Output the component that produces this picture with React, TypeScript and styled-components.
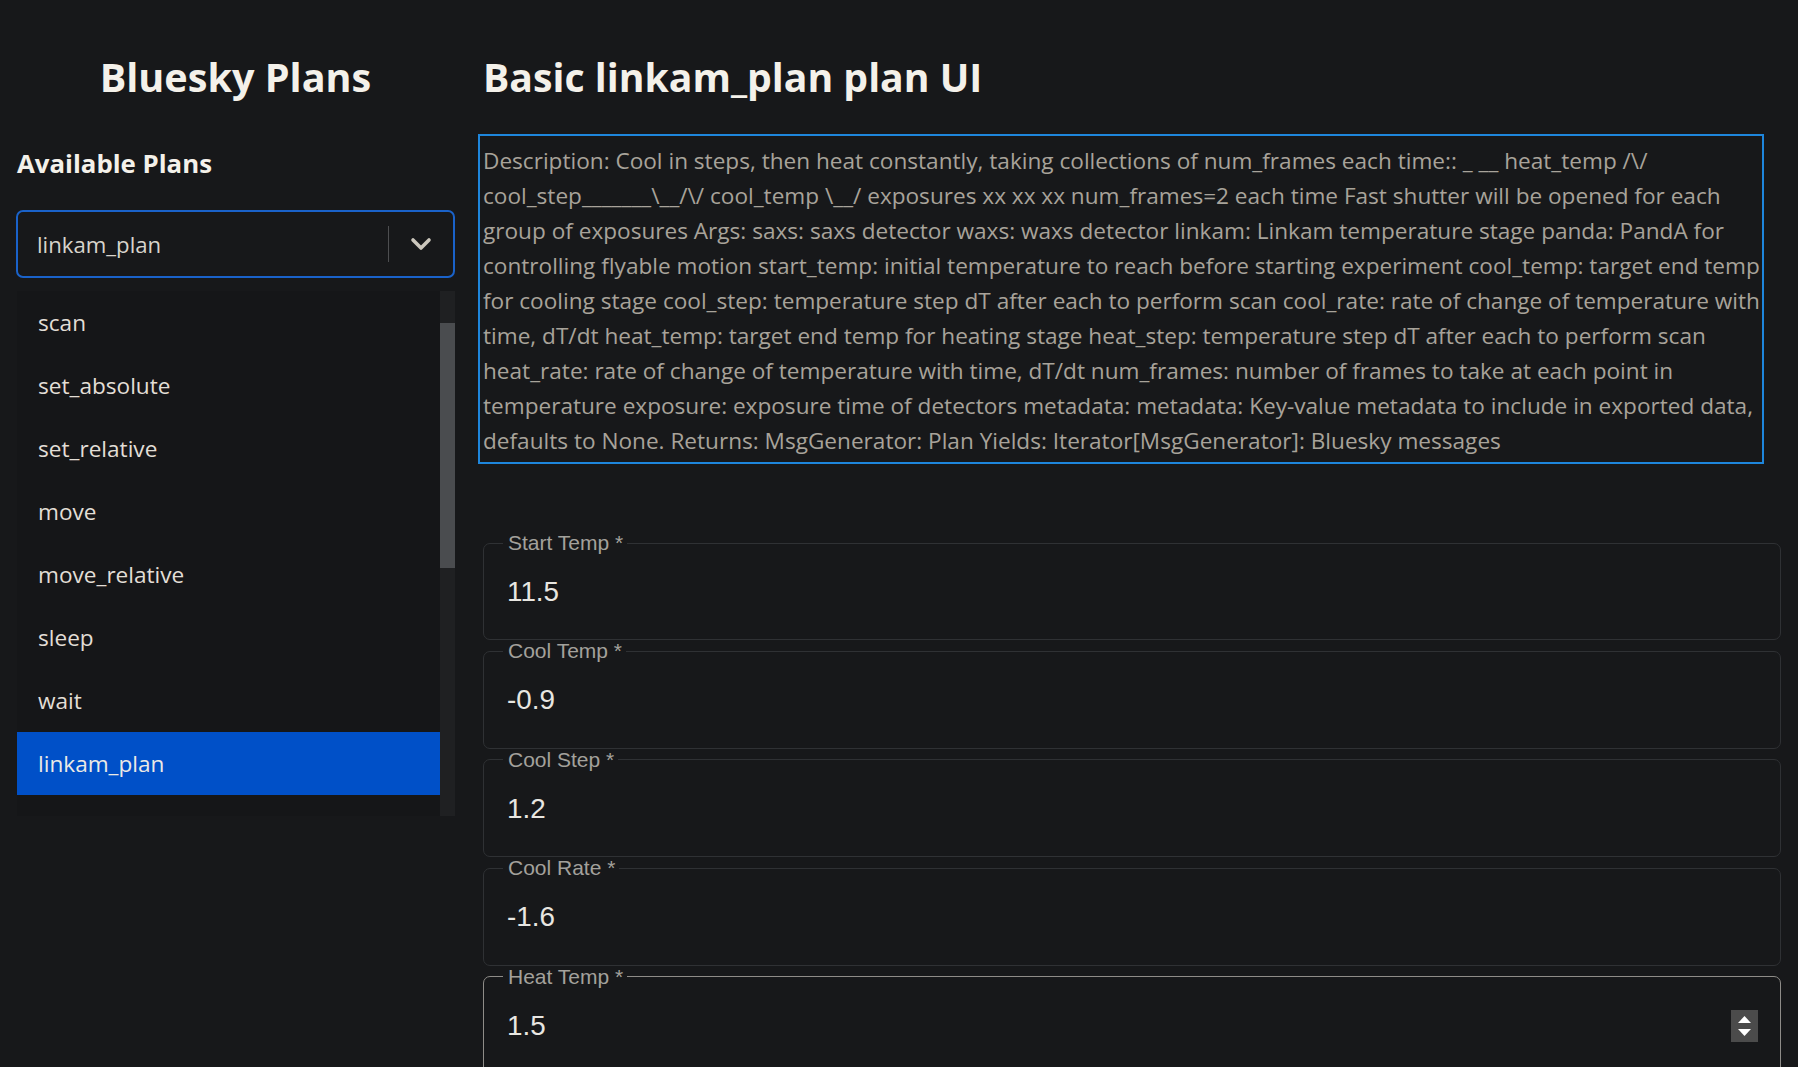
import React from "react";
import styled, { createGlobalStyle } from "styled-components";

const GlobalStyle = createGlobalStyle`
  html, body {
    margin: 0;
    padding: 0;
    background: #17181a;
    overflow: hidden;
  }
  body {
    font-family: "Open Sans", "Noto Sans", sans-serif;
  }
  * { box-sizing: border-box; }
`;

const Page = styled.div`
  display: grid;
  grid-template-columns: 439px 1fr;
  column-gap: 23px;
  padding: 47px 17px 0 16px;
  height: 1067px;
  overflow: hidden;
`;

const Sidebar = styled.aside`
  display: flex;
  flex-direction: column;
`;

const Main = styled.main`
  display: flex;
  flex-direction: column;
  min-width: 0;
`;

const Title = styled.h1<{ $center?: boolean }>`
  margin: 0;
  height: 60px;
  line-height: 60px;
  font-size: ${(p) => (p.$center ? "39.6px" : "39.2px")};
  font-weight: 700;
  color: #f4f1ea;
  text-align: ${(p) => (p.$center ? "center" : "left")};
  padding-left: ${(p) => (p.$center ? "0" : "5px")};
  white-space: nowrap;
`;

const SubTitle = styled.h2`
  margin: 39px 0 0 1px;
  height: 34px;
  line-height: 34px;
  font-size: 25.8px;
  font-weight: 700;
  color: #f4f1ea;
`;

const SelectBox = styled.div`
  margin-top: 30px;
  height: 68px;
  border: 2px solid #1a62c9;
  border-radius: 7px;
  display: flex;
  align-items: center;
`;

const SelectValue = styled.span`
  flex: 1;
  padding-left: 19px;
  font-size: 22.2px;
  color: #d8d4cc;
`;

const Separator = styled.span`
  width: 1px;
  height: 36px;
  background: #4d4e50;
`;

const Indicator = styled.span`
  width: 64px;
  display: flex;
  align-items: center;
  justify-content: center;
  color: #ccc7bd;
`;

const ListBox = styled.div`
  margin: 13px 0 0 1px;
  height: 525px;
  display: flex;
  background: #151618;
`;

const ListBody = styled.ul`
  flex: 1;
  margin: 0;
  padding: 0;
  list-style: none;
  overflow: hidden;
`;

const ListItem = styled.li<{ $selected?: boolean }>`
  height: 63px;
  display: flex;
  align-items: center;
  padding-left: 21px;
  font-size: 22.6px;
  color: ${(p) => (p.$selected ? "#eceae5" : "#e2ded6")};
  background: ${(p) => (p.$selected ? "#0050c8" : "transparent")};
`;

const ScrollTrack = styled.div`
  width: 15px;
  background: #1f2022;
  display: flex;
  flex-direction: column;
`;

const ScrollThumb = styled.div`
  margin-top: 32px;
  height: 245px;
  background: #4a4c4f;
`;

const Description = styled.div`
  margin: 27px 17px 0 0;
  height: 330px;
  border: 2px solid #1e86dc;
  padding: 7px 3px 3px 3px;
  font-size: 22.6px;
  line-height: 35px;
  color: #a8a39a;
  overflow: visible;
`;

const DescLine = styled.span`
  display: block;
  white-space: nowrap;
`;

const Fields = styled.form`
  margin: 68px 0 0 5px;
  display: flex;
  flex-direction: column;
`;

const Field = styled.fieldset<{ $active?: boolean }>`
  margin: 0;
  padding: 0 22px 0 23px;
  border: 1px solid ${(p) => (p.$active ? "#8e8c88" : "#2f3134")};
  border-radius: 7px;
  min-width: 0;
`;

const Legend = styled.legend`
  margin-left: -4px;
  padding: 0 4px 0 5px;
  height: 22px;
  line-height: 22px;
  font-family: "Liberation Sans", Arial, sans-serif;
  font-size: 21px;
  color: #a3a19c;
`;

const ValueRow = styled.div`
  display: flex;
  align-items: center;
  height: 32px;
  margin: 22px 0 31.4px 0;
`;

const Value = styled.span`
  flex: 1;
  font-family: "Liberation Sans", Arial, sans-serif;
  font-size: 27.8px;
  color: #e8e6e1;
`;

const Spinner = styled.span`
  width: 27px;
  height: 32px;
  background: #4b4b4b;
  display: flex;
  align-items: center;
  justify-content: center;
`;

const plans = [
  "scan",
  "set_absolute",
  "set_relative",
  "move",
  "move_relative",
  "sleep",
  "wait",
  "linkam_plan",
];

const descLines = [
  "Description: Cool in steps, then heat constantly, taking collections of num_frames each time:: _ __ heat_temp /\\/",
  "cool_step_______\\__/\\/ cool_temp \\__/ exposures xx xx xx num_frames=2 each time Fast shutter will be opened for each",
  "group of exposures Args: saxs: saxs detector waxs: waxs detector linkam: Linkam temperature stage panda: PandA for",
  "controlling flyable motion start_temp: initial temperature to reach before starting experiment cool_temp: target end temp",
  "for cooling stage cool_step: temperature step dT after each to perform scan cool_rate: rate of change of temperature with",
  "time, dT/dt heat_temp: target end temp for heating stage heat_step: temperature step dT after each to perform scan",
  "heat_rate: rate of change of temperature with time, dT/dt num_frames: number of frames to take at each point in",
  "temperature exposure: exposure time of detectors metadata: metadata: Key-value metadata to include in exported data,",
  "defaults to None. Returns: MsgGenerator: Plan Yields: Iterator[MsgGenerator]: Bluesky messages",
];

const fields = [
  { label: "Start Temp *", value: "11.5" },
  { label: "Cool Temp *", value: "-0.9" },
  { label: "Cool Step *", value: "1.2" },
  { label: "Cool Rate *", value: "-1.6" },
  { label: "Heat Temp *", value: "1.5", active: true },
];

const Chevron = () => (
  <svg width="22" height="14" viewBox="0 0 22 14" fill="none">
    <polyline
      points="3,3 11,11 19,3"
      stroke="currentColor"
      strokeWidth="3.6"
      strokeLinecap="round"
      strokeLinejoin="round"
    />
  </svg>
);

const SpinIcon = () => (
  <svg width="15" height="22" viewBox="0 0 15 22">
    <polygon points="7.5,1 14,8 1,8" fill="#ffffff" />
    <polygon points="1,14 14,14 7.5,21" fill="#ffffff" />
  </svg>
);

export default function App() {
  return (
    <>
      <GlobalStyle />
      <Page>
        <Sidebar>
          <Title $center>Bluesky Plans</Title>
          <SubTitle>Available Plans</SubTitle>
          <SelectBox>
            <SelectValue>linkam_plan</SelectValue>
            <Separator />
            <Indicator>
              <Chevron />
            </Indicator>
          </SelectBox>
          <ListBox>
            <ListBody>
              {plans.map((p) => (
                <ListItem key={p} $selected={p === "linkam_plan"}>
                  {p}
                </ListItem>
              ))}
            </ListBody>
            <ScrollTrack>
              <ScrollThumb />
            </ScrollTrack>
          </ListBox>
        </Sidebar>
        <Main>
          <Title>Basic linkam_plan plan UI</Title>
          <Description>
            {descLines.map((l, i) => (
              <DescLine key={i}>{l}</DescLine>
            ))}
          </Description>
          <Fields>
            {fields.map((f) => (
              <Field key={f.label} $active={f.active}>
                <Legend>{f.label}</Legend>
                <ValueRow>
                  <Value>{f.value}</Value>
                  {f.active && (
                    <Spinner>
                      <SpinIcon />
                    </Spinner>
                  )}
                </ValueRow>
              </Field>
            ))}
          </Fields>
        </Main>
      </Page>
    </>
  );
}
